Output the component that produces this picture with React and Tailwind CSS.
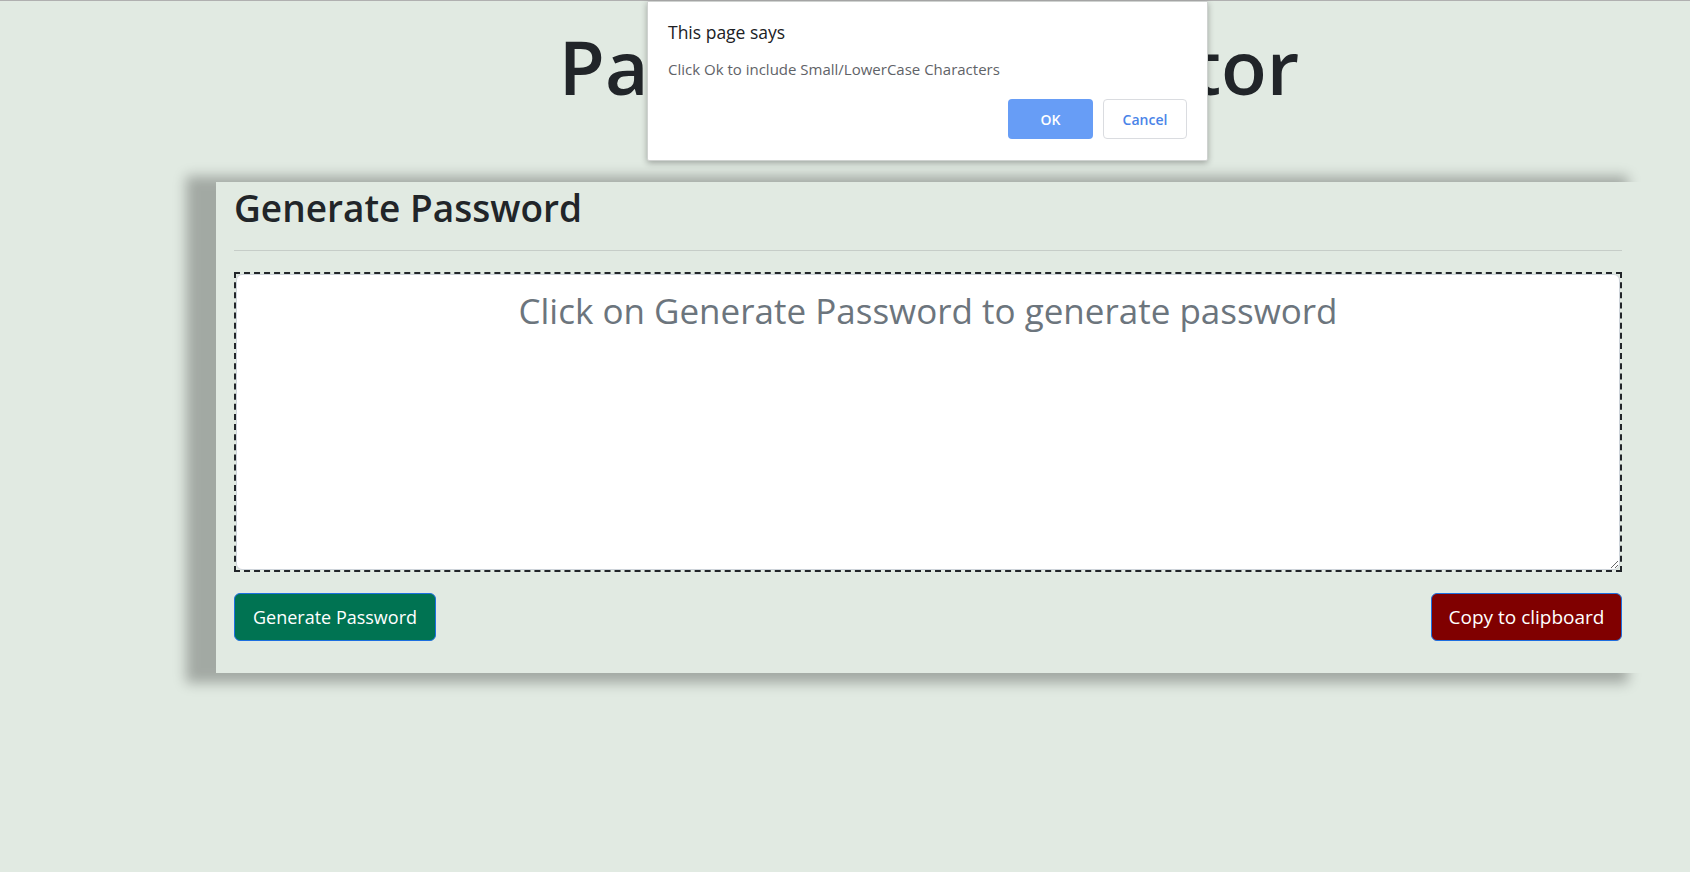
import React from "react";

export default function App() {
  return (
    <div className="relative min-h-screen bg-[#e1eae2] border-t border-[#b0b0b0] font-['Open_Sans','Noto_Sans',sans-serif] text-[#212529]">
      <div className="ml-[216px] w-[1426px] pb-[200px]">
        <h1 className="mt-[20px] text-center text-[75px] font-semibold leading-[1.2]">
          Password Generator
        </h1>
        <div className="mt-[71px] bg-[#e1eae2] pl-[18px] pr-[20px] pt-[4px] pb-[32px] shadow-[-22px_2px_12px_8px_rgba(0,0,0,0.28)]">
          <h2 className="text-[37px] font-semibold leading-[1.2]">Generate Password</h2>
          <hr className="mt-[20px] border-0 border-t border-[#c6cdc8]" />
          <div className="mt-[21px] border-2 border-dashed border-[#212529] h-[300px] flex">
            <textarea
              readOnly
              placeholder="Click on Generate Password to generate password"
              className="flex-1 bg-white border border-[#ced4da] rounded-[6px] pt-[10px] px-3 text-center text-[35px] leading-[1.5] placeholder:text-[#6c757d] outline-none resize-y"
            />
          </div>
          <div className="mt-[21px] flex justify-between">
            <button className="w-[202px] h-[48px] rounded-[6px] bg-[#007352] border border-[#1d6fe0] text-white text-[18px] leading-none">
              Generate Password
            </button>
            <button className="w-[191px] h-[48px] rounded-[6px] bg-[#800000] border border-[#1d6fe0] text-white text-[19px] leading-none">
              Copy to clipboard
            </button>
          </div>
        </div>
      </div>

      <div className="absolute left-[647px] top-0 w-[561px] h-[160px] bg-white border border-[#cfd2d0] rounded-b-[2px] shadow-[0_2px_6px_rgba(0,0,0,0.3)] px-[20px]">
        <div className="mt-[20px] text-[17.5px] leading-[20px] text-[#202124]">This page says</div>
        <div className="mt-[18px] text-[15px] leading-[18px] text-[#5f6368]">
          Click Ok to include Small/LowerCase Characters
        </div>
        <div className="mt-[21px] flex justify-end gap-[10px]">
          <button className="w-[85px] h-[40px] rounded-[4px] bg-[#679df6] text-white text-[14px] font-semibold">
            OK
          </button>
          <button className="w-[84px] h-[40px] rounded-[4px] bg-white border border-[#dadce0] text-[#4a84e8] text-[14px] font-semibold">
            Cancel
          </button>
        </div>
      </div>
    </div>
  );
}
